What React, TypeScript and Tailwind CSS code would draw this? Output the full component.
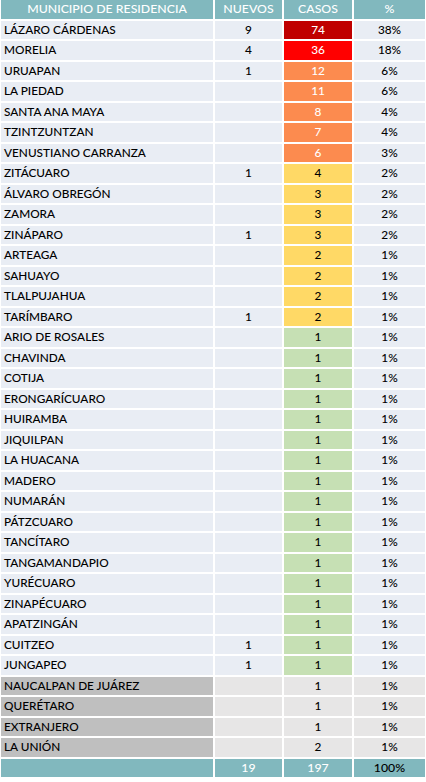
import React from "react";

const RED_D = "bg-[#c00000] text-white";
const RED = "bg-[#ff0000] text-white";
const OR = "bg-[#fc8b4f] text-white";
const YEL = "bg-[#ffd966] text-black";
const GRN = "bg-[#c6e0b4] text-black";
const GRY = "bg-[#e7e6e6] text-black";

const data: [string, string, string, string, string, boolean?][] = [
  ["LÁZARO CÁRDENAS", "9", "74", "38%", RED_D],
  ["MORELIA", "4", "36", "18%", RED],
  ["URUAPAN", "1", "12", "6%", OR],
  ["LA PIEDAD", "", "11", "6%", OR],
  ["SANTA ANA MAYA", "", "8", "4%", OR],
  ["TZINTZUNTZAN", "", "7", "4%", OR],
  ["VENUSTIANO CARRANZA", "", "6", "3%", OR],
  ["ZITÁCUARO", "1", "4", "2%", YEL],
  ["ÁLVARO OBREGÓN", "", "3", "2%", YEL],
  ["ZAMORA", "", "3", "2%", YEL],
  ["ZINÁPARO", "1", "3", "2%", YEL],
  ["ARTEAGA", "", "2", "1%", YEL],
  ["SAHUAYO", "", "2", "1%", YEL],
  ["TLALPUJAHUA", "", "2", "1%", YEL],
  ["TARÍMBARO", "1", "2", "1%", YEL],
  ["ARIO DE ROSALES", "", "1", "1%", GRN],
  ["CHAVINDA", "", "1", "1%", GRN],
  ["COTIJA", "", "1", "1%", GRN],
  ["ERONGARÍCUARO", "", "1", "1%", GRN],
  ["HUIRAMBA", "", "1", "1%", GRN],
  ["JIQUILPAN", "", "1", "1%", GRN],
  ["LA HUACANA", "", "1", "1%", GRN],
  ["MADERO", "", "1", "1%", GRN],
  ["NUMARÁN", "", "1", "1%", GRN],
  ["PÁTZCUARO", "", "1", "1%", GRN],
  ["TANCÍTARO", "", "1", "1%", GRN],
  ["TANGAMANDAPIO", "", "1", "1%", GRN],
  ["YURÉCUARO", "", "1", "1%", GRN],
  ["ZINAPÉCUARO", "", "1", "1%", GRN],
  ["APATZINGÁN", "", "1", "1%", GRN],
  ["CUITZEO", "1", "1", "1%", GRN],
  ["JUNGAPEO", "1", "1", "1%", GRN],
  ["NAUCALPAN DE JUÁREZ", "", "1", "1%", GRY, true],
  ["QUERÉTARO", "", "1", "1%", GRY, true],
  ["EXTRANJERO", "", "1", "1%", GRY, true],
  ["LA UNIÓN", "", "2", "1%", GRY, true],
];

const cell = "h-[18.5px] flex items-center justify-center leading-none";

export default function App() {
  return (
    <div
      className="w-[426px] h-[782px] bg-white pl-[1px] text-[11.8px] font-medium text-black"
      style={{ fontFamily: "Lato, 'Liberation Sans', sans-serif" }}
    >
      <div className="grid grid-cols-[212px_67px_68px_71px] gap-[2px]">
        <div className={`${cell} bg-[#81b8be] text-white text-[12.3px]`}>MUNICIPIO DE RESIDENCIA</div>
        <div className={`${cell} bg-[#81b8be] text-white text-[12.3px]`}>NUEVOS</div>
        <div className={`${cell} bg-[#81b8be] text-white text-[12.3px]`}>CASOS</div>
        <div className={`${cell} bg-[#81b8be] text-white text-[12.3px]`}>%</div>
        {data.map(([name, nuevos, casos, pct, col, gray]) => (
          <React.Fragment key={name}>
            <div className={`h-[18.5px] flex items-center pl-[3px] leading-none ${gray ? "bg-[#bfbfbf]" : "bg-[#e9edf4]"}`}>
              {name}
            </div>
            <div className={`${cell} ${gray ? "bg-[#e7e6e6]" : "bg-[#e9edf4]"}`}>{nuevos}</div>
            <div className={`${cell} ${col}`}>{casos}</div>
            <div className={`${cell} ${gray ? "bg-[#e7e6e6]" : "bg-[#e9edf4]"}`}>{pct}</div>
          </React.Fragment>
        ))}
        <div className={`${cell} bg-[#81b8be]`}></div>
        <div className={`${cell} bg-[#81b8be] text-white text-[12.3px]`}>19</div>
        <div className={`${cell} bg-[#81b8be] text-white text-[12.3px]`}>197</div>
        <div className={`${cell} bg-[#81b8be] text-black text-[12.3px]`}>100%</div>
      </div>
    </div>
  );
}
